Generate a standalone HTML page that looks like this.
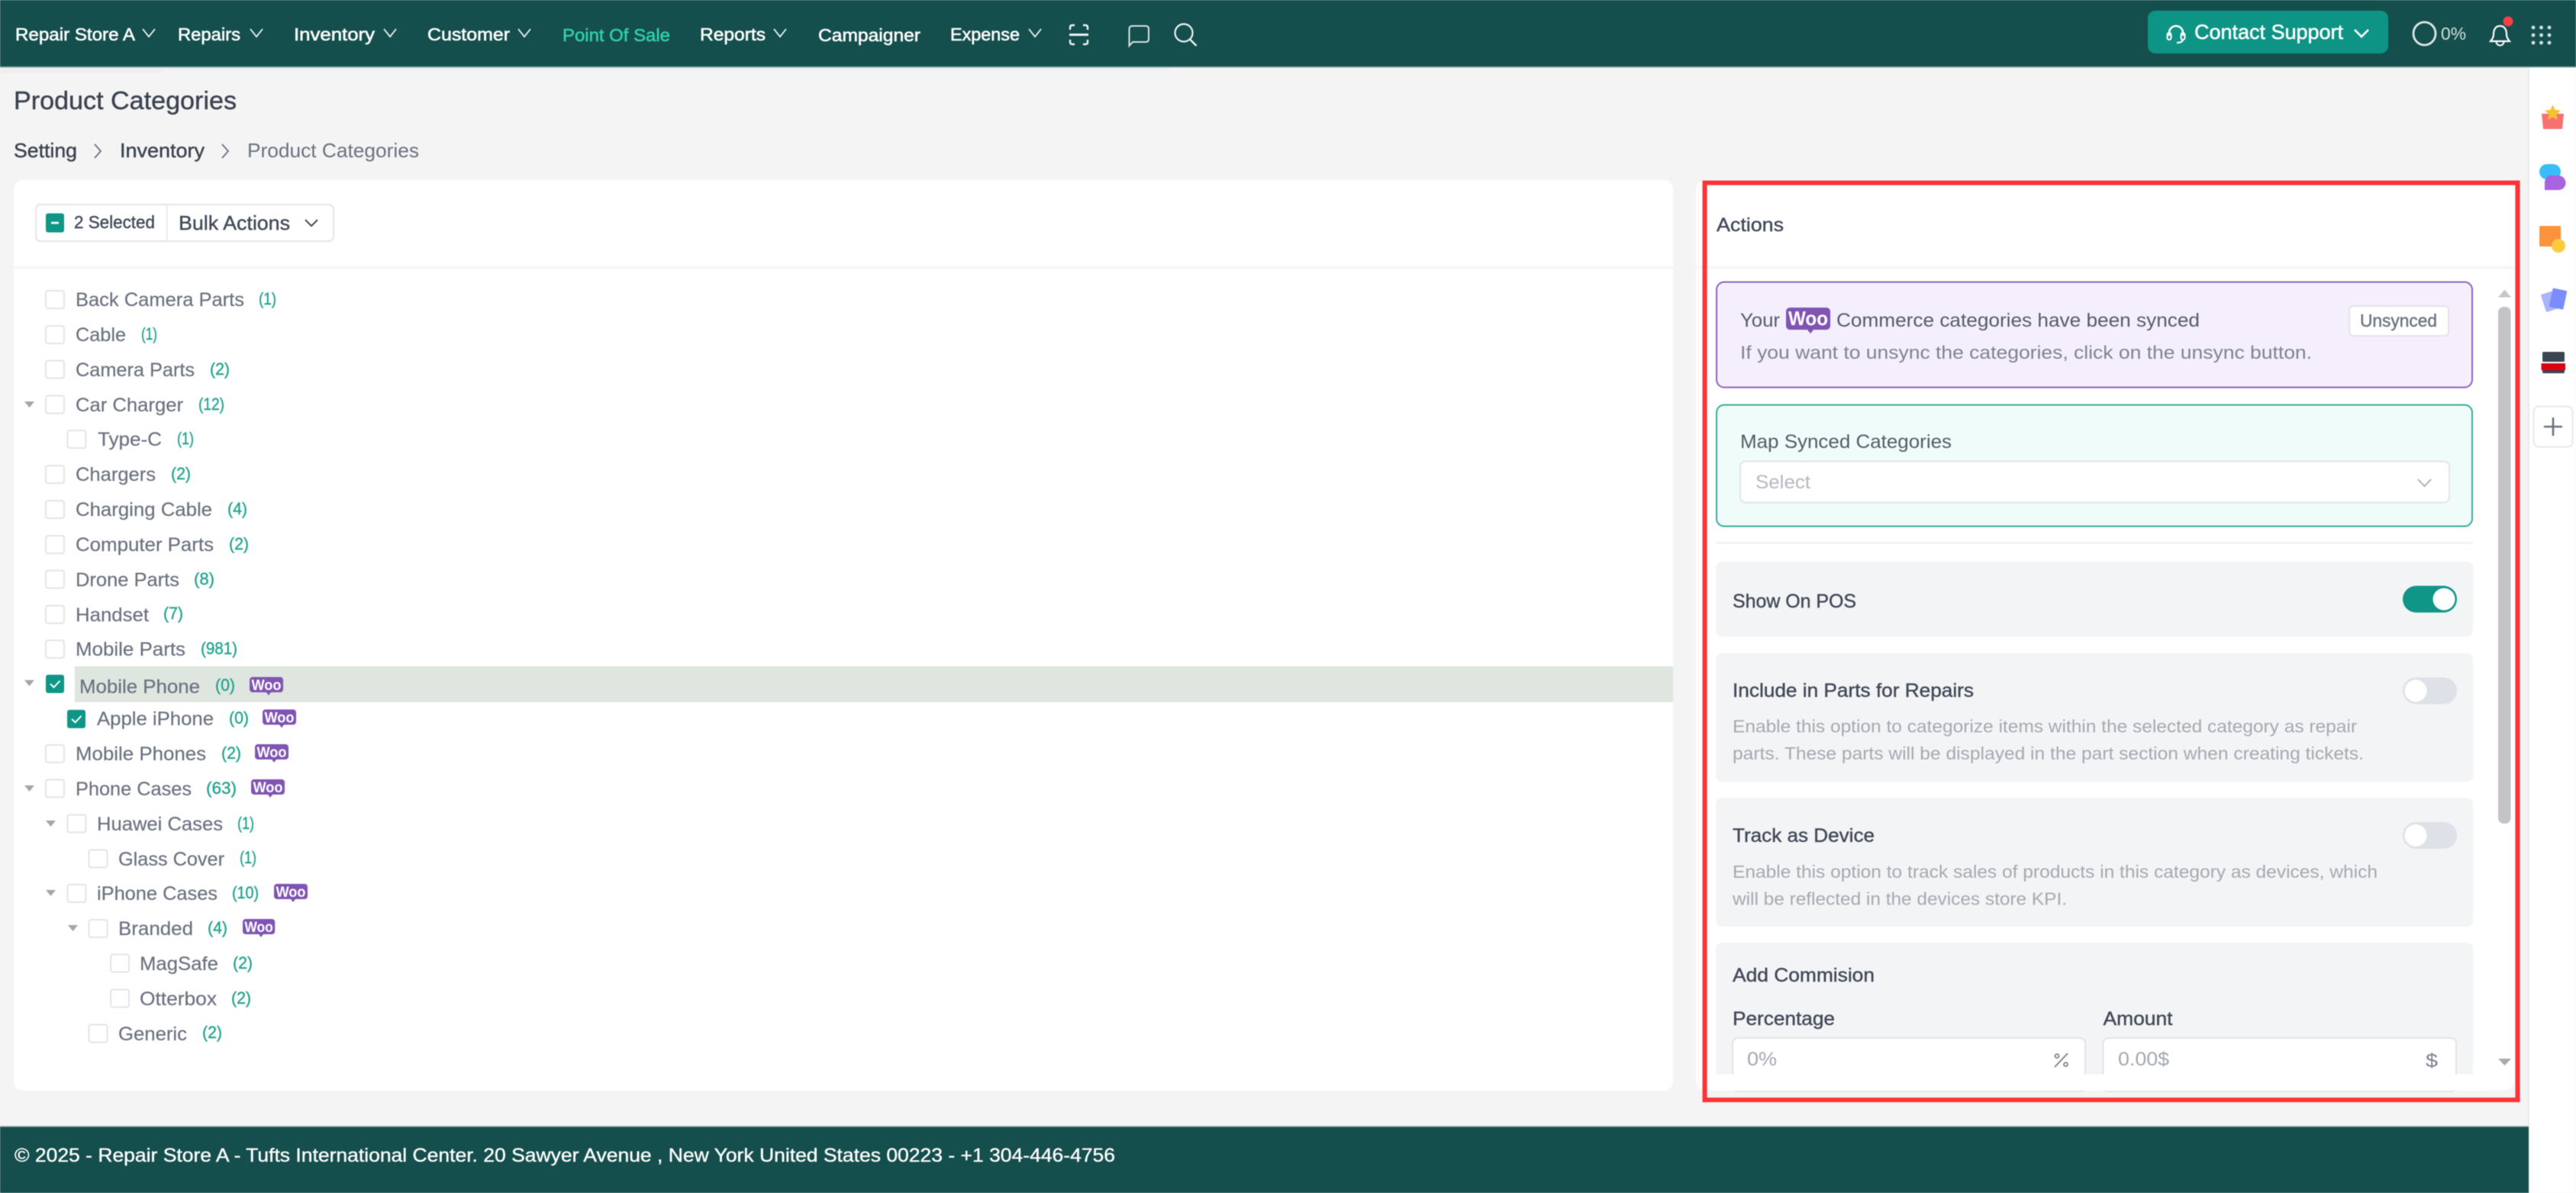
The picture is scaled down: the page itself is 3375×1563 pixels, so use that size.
<!DOCTYPE html>
<html lang="en"><head><meta charset="utf-8"><title>Product Categories</title>
<style>
html,body{margin:0;padding:0;width:3375px;height:1563px;overflow:hidden;background:#f4f4f4}
svg{display:block;filter:blur(.55px)}
text{font-family:"Liberation Sans",sans-serif;fill:currentColor;stroke:currentColor;stroke-width:0}
.m{stroke-width:.4px}
.n{font-size:23px;color:#fff;stroke-width:.55px}
.l{font-size:25px;color:#6b7280;stroke-width:.2px}
.c{font-size:22px;color:#27a592;stroke-width:.45px}
.b{fill:#fff;stroke:#e2e4ea;stroke-width:2}
.a{fill:#a3a6ad}
.w{font-size:19px;font-weight:bold;color:#fff}
.d{font-size:23px;color:#a5a9b1}
.h{font-size:25px;color:#414958}
</style></head><body>
<svg xmlns="http://www.w3.org/2000/svg" width="3375" height="1563" viewBox="0 0 3375 1563">
<rect width="3375" height="1563" fill="#f4f4f4"/>

<!-- right strip -->
<rect x="3313" y="88" width="62" height="1475" fill="#fff"/>
<rect x="3312" y="88" width="2" height="1475" fill="#e9eaee"/>

<!-- header -->
<rect x="0" y="88" width="212" height="8" fill="#efefef"/>
<rect x="212" y="88" width="1325" height="4" fill="#f0f0f0"/>
<rect width="3375" height="88" fill="#154f4d"/>
<rect y="87" width="3375" height="1.5" fill="#7d9e9c"/>
<text class="n" x="20" y="53" textLength="157" lengthAdjust="spacingAndGlyphs">Repair Store A</text>
<text class="n" x="233" y="53" textLength="82" lengthAdjust="spacingAndGlyphs">Repairs</text>
<text class="n" x="385" y="53" textLength="106" lengthAdjust="spacingAndGlyphs">Inventory</text>
<text class="n" x="560" y="53" textLength="108" lengthAdjust="spacingAndGlyphs">Customer</text>
<text class="n" x="737" y="54" textLength="141" lengthAdjust="spacingAndGlyphs" style="color:#2fd0ad">Point Of Sale</text>
<text class="n" x="917" y="53" textLength="86" lengthAdjust="spacingAndGlyphs">Reports</text>
<text class="n" x="1072" y="54" textLength="134" lengthAdjust="spacingAndGlyphs">Campaigner</text>
<text class="n" x="1245" y="53" textLength="91" lengthAdjust="spacingAndGlyphs">Expense</text>
<g fill="none" stroke="#eef4f3" stroke-width="1.8">
<path d="M187 38l8 10 8-10M328 38l8 10 8-10M503 38l8 10 8-10M679 38l8 10 8-10M1014 38l8 10 8-10M1348 38l8 10 8-10"/>
<path stroke-width="2.4" d="M1402 39v-3q0-3 3-3h3M1419 33h3q3 0 3 3v3M1402 52v3q0 3 3 3h3M1419 58h3q3 0 3-3v-3"/>
<path stroke-width="3" d="M1401 45.500h25"/>
<path stroke="#d7e3e2" stroke-width="2" d="M1479.500 60V38q0-4 4-4h17.500q4 0 4 4v13q0 4-4 4h-17z"/>
<circle cx="1551" cy="43" r="11.500" stroke-width="2.200"/><path stroke-width="2.400" d="M1559.500 52l8 8"/>
</g>
<rect x="2814" y="14" width="315" height="56" rx="10" fill="#0e9485"/>
<g fill="none" stroke="#fff">
<path stroke-width="2.600" d="M2842 47v-4a9 9 0 0 1 18 0v4"/>
<rect x="2839.500" y="43" width="5" height="9" rx="2.500" stroke-width="2"/><rect x="2857.500" y="43" width="5" height="9" rx="2.500" stroke-width="2"/>
<path stroke-width="2.200" d="M2860 52q-1 4-8 4"/>
<path stroke-width="2.600" d="M3085 39l9 9 9-9"/>
</g>
<text x="2875" y="51" textLength="195" lengthAdjust="spacingAndGlyphs" style="color:#fff;font-size:27px;stroke-width:.5px">Contact Support</text>
<ellipse cx="3176.500" cy="44" rx="14.500" ry="15" fill="none" stroke="#dfe7e6" stroke-width="2.800"/>
<text x="3198" y="52" textLength="33" lengthAdjust="spacingAndGlyphs" style="color:#cfe0df;font-size:23px">0%</text>
<path d="M3275.500 34c-6 0-8.500 5-8.500 11c0 5-2.500 7-4 9h25c-1.500-2-4-4-4-9c0-6-2.500-11-8.500-11z" fill="none" stroke="#fff" stroke-width="2.200"/>
<path d="M3270.500 54.500a5 5 0 0 0 10 0" fill="none" stroke="#fff" stroke-width="2"/>
<circle cx="3286" cy="28" r="6.500" fill="#f4404a"/>
<g fill="#d5e1e0"><circle cx="3319" cy="36" r="2.400"/><circle cx="3329.500" cy="36" r="2.400"/><circle cx="3340" cy="36" r="2.400"/><circle cx="3319" cy="46" r="2.400"/><circle cx="3329.500" cy="46" r="2.400"/><circle cx="3340" cy="46" r="2.400"/><circle cx="3319" cy="56" r="2.400"/><circle cx="3329.500" cy="56" r="2.400"/><circle cx="3340" cy="56" r="2.400"/></g>

<!-- page title -->
<text x="18" y="143" textLength="292" lengthAdjust="spacingAndGlyphs" class="m" style="font-size:33px;color:#3b4350">Product Categories</text>
<text x="18" y="206" textLength="83" lengthAdjust="spacingAndGlyphs" class="m" style="font-size:26px;color:#3b4350">Setting</text>
<text x="157" y="206" textLength="111" lengthAdjust="spacingAndGlyphs" class="m" style="font-size:26px;color:#3b4350">Inventory</text>
<text x="324" y="206" textLength="225" lengthAdjust="spacingAndGlyphs" style="font-size:26px;color:#6b7280">Product Categories</text>
<path d="M124 189l8 9-8 9M291 189l8 9-8 9" fill="none" stroke="#6b7280" stroke-width="1.800"/>

<!-- left panel -->
<rect x="18" y="236" width="2174" height="1193" rx="12" fill="#fff"/>
<rect x="18" y="349" width="2174" height="3" fill="#f3f4f5"/>
<rect x="47" y="268" width="390" height="48" rx="6" fill="#fff" stroke="#e4e6ea" stroke-width="2"/>
<rect x="218" y="268" width="1.500" height="48" fill="#e4e6ea"/>
<rect x="60" y="279.500" width="24" height="25" rx="3" fill="#0f9686"/>
<rect x="67" y="290.500" width="10" height="3" fill="#e8f5f3"/>
<text x="97" y="299" textLength="106" lengthAdjust="spacingAndGlyphs" class="m" style="font-size:23px;color:#414958">2 Selected</text>
<text x="234" y="301" textLength="146" lengthAdjust="spacingAndGlyphs" class="m" style="font-size:26px;color:#414958">Bulk Actions</text>
<path d="M400 288l8 8 8-8" fill="none" stroke="#414958" stroke-width="2"/>

<rect x="98" y="873" width="2094" height="47" fill="#dfe6df"/>

<!-- tree boxes -->
<g>
<rect class="b" x="60" y="381" width="24" height="23" rx="3"/>
<rect class="b" x="60" y="427" width="24" height="23" rx="3"/>
<rect class="b" x="60" y="472.500" width="24" height="23" rx="3"/>
<rect class="b" x="60" y="518.500" width="24" height="23" rx="3"/>
<rect class="b" x="88.500" y="564" width="24" height="23" rx="3"/>
<rect class="b" x="60" y="610" width="24" height="23" rx="3"/>
<rect class="b" x="60" y="656" width="24" height="23" rx="3"/>
<rect class="b" x="60" y="702" width="24" height="23" rx="3"/>
<rect class="b" x="60" y="747.500" width="24" height="23" rx="3"/>
<rect class="b" x="60" y="793.500" width="24" height="23" rx="3"/>
<rect class="b" x="60" y="839" width="24" height="23" rx="3"/>
<rect class="b" x="60" y="976" width="24" height="23" rx="3"/>
<rect class="b" x="60" y="1021.500" width="24" height="23" rx="3"/>
<rect class="b" x="88.500" y="1067.500" width="24" height="23" rx="3"/>
<rect class="b" x="116.500" y="1113.500" width="24" height="23" rx="3"/>
<rect class="b" x="88.500" y="1159" width="24" height="23" rx="3"/>
<rect class="b" x="116.500" y="1205" width="24" height="23" rx="3"/>
<rect class="b" x="145" y="1250.500" width="24" height="23" rx="3"/>
<rect class="b" x="145" y="1296.500" width="24" height="23" rx="3"/>
<rect class="b" x="116.500" y="1342.500" width="24" height="23" rx="3"/>
</g>
<rect x="60" y="884" width="24" height="24" rx="3" fill="#0f9686"/>
<path d="M66 896l4.500 4.500 8-8.500" fill="none" stroke="#fff" stroke-width="2"/>
<rect x="88" y="930" width="24" height="24" rx="3" fill="#0f9686"/>
<path d="M94 942l4.500 4.500 8-8.500" fill="none" stroke="#fff" stroke-width="2"/>
<g>
<path class="a" d="M32 526h13l-6.500 8z"/>
<path class="a" d="M32 891h13l-6.500 8z"/>
<path class="a" d="M32 1029h13l-6.500 8z"/>
<path class="a" d="M60 1075h13l-6.500 8z"/>
<path class="a" d="M60 1166h13l-6.500 8z"/>
<path class="a" d="M89 1212h13l-6.500 8z"/>
</g>

<!-- tree labels -->
<text class="l" x="99" y="401" textLength="221" lengthAdjust="spacingAndGlyphs">Back Camera Parts</text>
<text class="l" x="99" y="447" textLength="66" lengthAdjust="spacingAndGlyphs">Cable</text>
<text class="l" x="99" y="493" textLength="156" lengthAdjust="spacingAndGlyphs">Camera Parts</text>
<text class="l" x="99" y="539" textLength="141" lengthAdjust="spacingAndGlyphs">Car Charger</text>
<text class="l" x="128" y="584" textLength="84" lengthAdjust="spacingAndGlyphs">Type-C</text>
<text class="l" x="99" y="630" textLength="105" lengthAdjust="spacingAndGlyphs">Chargers</text>
<text class="l" x="99" y="676" textLength="179" lengthAdjust="spacingAndGlyphs">Charging Cable</text>
<text class="l" x="99" y="722" textLength="181" lengthAdjust="spacingAndGlyphs">Computer Parts</text>
<text class="l" x="99" y="768" textLength="136" lengthAdjust="spacingAndGlyphs">Drone Parts</text>
<text class="l" x="99" y="814" textLength="96" lengthAdjust="spacingAndGlyphs">Handset</text>
<text class="l" x="99" y="859" textLength="144" lengthAdjust="spacingAndGlyphs">Mobile Parts</text>
<text class="l" x="104" y="908" textLength="158" lengthAdjust="spacingAndGlyphs">Mobile Phone</text>
<text class="l" x="127" y="950" textLength="153" lengthAdjust="spacingAndGlyphs">Apple iPhone</text>
<text class="l" x="99" y="996" textLength="171" lengthAdjust="spacingAndGlyphs">Mobile Phones</text>
<text class="l" x="99" y="1042" textLength="152" lengthAdjust="spacingAndGlyphs">Phone Cases</text>
<text class="l" x="127" y="1088" textLength="165" lengthAdjust="spacingAndGlyphs">Huawei Cases</text>
<text class="l" x="155" y="1134" textLength="139" lengthAdjust="spacingAndGlyphs">Glass Cover</text>
<text class="l" x="127" y="1179" textLength="158" lengthAdjust="spacingAndGlyphs">iPhone Cases</text>
<text class="l" x="155" y="1225" textLength="98" lengthAdjust="spacingAndGlyphs">Branded</text>
<text class="l" x="183" y="1271" textLength="103" lengthAdjust="spacingAndGlyphs">MagSafe</text>
<text class="l" x="183" y="1317" textLength="101" lengthAdjust="spacingAndGlyphs">Otterbox</text>
<text class="l" x="155" y="1363" textLength="90" lengthAdjust="spacingAndGlyphs">Generic</text>

<text class="c" x="339" y="399" textLength="23" lengthAdjust="spacingAndGlyphs">(1)</text>
<text class="c" x="185" y="445" textLength="21" lengthAdjust="spacingAndGlyphs">(1)</text>
<text class="c" x="275" y="491" textLength="26" lengthAdjust="spacingAndGlyphs">(2)</text>
<text class="c" x="260" y="537" textLength="34" lengthAdjust="spacingAndGlyphs">(12)</text>
<text class="c" x="232" y="582" textLength="22" lengthAdjust="spacingAndGlyphs">(1)</text>
<text class="c" x="224" y="628" textLength="26" lengthAdjust="spacingAndGlyphs">(2)</text>
<text class="c" x="298" y="674" textLength="26" lengthAdjust="spacingAndGlyphs">(4)</text>
<text class="c" x="300" y="720" textLength="26" lengthAdjust="spacingAndGlyphs">(2)</text>
<text class="c" x="254" y="766" textLength="27" lengthAdjust="spacingAndGlyphs">(8)</text>
<text class="c" x="214" y="811" textLength="26" lengthAdjust="spacingAndGlyphs">(7)</text>
<text class="c" x="263" y="857" textLength="48" lengthAdjust="spacingAndGlyphs">(981)</text>
<text class="c" x="282" y="905" textLength="26" lengthAdjust="spacingAndGlyphs">(0)</text>
<text class="c" x="300" y="948" textLength="26" lengthAdjust="spacingAndGlyphs">(0)</text>
<text class="c" x="290" y="994" textLength="26" lengthAdjust="spacingAndGlyphs">(2)</text>
<text class="c" x="270" y="1040" textLength="40" lengthAdjust="spacingAndGlyphs">(63)</text>
<text class="c" x="311" y="1086" textLength="22" lengthAdjust="spacingAndGlyphs">(1)</text>
<text class="c" x="314" y="1131" textLength="22" lengthAdjust="spacingAndGlyphs">(1)</text>
<text class="c" x="304" y="1177" textLength="35" lengthAdjust="spacingAndGlyphs">(10)</text>
<text class="c" x="272" y="1223" textLength="26" lengthAdjust="spacingAndGlyphs">(4)</text>
<text class="c" x="305" y="1269" textLength="26" lengthAdjust="spacingAndGlyphs">(2)</text>
<text class="c" x="303" y="1315" textLength="26" lengthAdjust="spacingAndGlyphs">(2)</text>
<text class="c" x="265" y="1360" textLength="26" lengthAdjust="spacingAndGlyphs">(2)</text>

<g transform="translate(327,887)"><path fill="#7f54b3" d="M4 0H40a4 4 0 0 1 4 4V16a4 4 0 0 1-4 4H28l-3 4-3-4H4a4 4 0 0 1-4-4V4a4 4 0 0 1 4-4Z"/><text class="w" x="2.500" y="17" textLength="39" lengthAdjust="spacingAndGlyphs">Woo</text></g>
<g transform="translate(344,929.500)"><path fill="#7f54b3" d="M4 0H40a4 4 0 0 1 4 4V16a4 4 0 0 1-4 4H28l-3 4-3-4H4a4 4 0 0 1-4-4V4a4 4 0 0 1 4-4Z"/><text class="w" x="2.500" y="17" textLength="39" lengthAdjust="spacingAndGlyphs">Woo</text></g>
<g transform="translate(334,975)"><path fill="#7f54b3" d="M4 0H40a4 4 0 0 1 4 4V16a4 4 0 0 1-4 4H28l-3 4-3-4H4a4 4 0 0 1-4-4V4a4 4 0 0 1 4-4Z"/><text class="w" x="2.500" y="17" textLength="39" lengthAdjust="spacingAndGlyphs">Woo</text></g>
<g transform="translate(329,1021)"><path fill="#7f54b3" d="M4 0H40a4 4 0 0 1 4 4V16a4 4 0 0 1-4 4H28l-3 4-3-4H4a4 4 0 0 1-4-4V4a4 4 0 0 1 4-4Z"/><text class="w" x="2.500" y="17" textLength="39" lengthAdjust="spacingAndGlyphs">Woo</text></g>
<g transform="translate(359,1158)"><path fill="#7f54b3" d="M4 0H40a4 4 0 0 1 4 4V16a4 4 0 0 1-4 4H28l-3 4-3-4H4a4 4 0 0 1-4-4V4a4 4 0 0 1 4-4Z"/><text class="w" x="2.500" y="17" textLength="39" lengthAdjust="spacingAndGlyphs">Woo</text></g>
<g transform="translate(318,1204) scale(.96,1)"><path fill="#7f54b3" d="M4 0H40a4 4 0 0 1 4 4V16a4 4 0 0 1-4 4H28l-3 4-3-4H4a4 4 0 0 1-4-4V4a4 4 0 0 1 4-4Z"/><text class="w" x="2.500" y="17" textLength="39" lengthAdjust="spacingAndGlyphs">Woo</text></g>

<!-- right panel -->
<rect x="2222" y="236" width="1072" height="1192" rx="12" fill="#fff"/>
<rect x="2222" y="349" width="1073" height="3" fill="#f3f4f5"/>
<text x="2249" y="303" textLength="88" lengthAdjust="spacingAndGlyphs" class="m" style="font-size:25px;color:#414958">Actions</text>

<rect x="2249" y="369.500" width="990" height="138" rx="10" fill="#f5effd" stroke="#8d63b8" stroke-width="2"/>
<text x="2280" y="428" textLength="52" lengthAdjust="spacingAndGlyphs" class="h" style="color:#555c69">Your</text>
<g transform="translate(2340,403)"><path fill="#7f54b3" d="M5 0H53a5 5 0 0 1 5 5V24a5 5 0 0 1-5 5H36l-4 5-4-5H5a5 5 0 0 1-5-5V5a5 5 0 0 1 5-5Z"/><text class="w" x="3" y="23" textLength="52" lengthAdjust="spacingAndGlyphs" style="font-size:26px">Woo</text></g>
<text x="2406" y="428" textLength="476" lengthAdjust="spacingAndGlyphs" class="h" style="color:#555c69">Commerce categories have been synced</text>
<text x="2280" y="470" textLength="749" lengthAdjust="spacingAndGlyphs" style="font-size:24px;color:#7f848e">If you want to unsync the categories, click on the unsync button.</text>
<rect x="3078" y="401" width="130" height="39" rx="5" fill="#fff" stroke="#e2e3e8" stroke-width="2"/>
<text x="3092" y="428" textLength="101" lengthAdjust="spacingAndGlyphs" class="m" style="font-size:23px;color:#6b7280">Unsynced</text>

<rect x="2249" y="530.500" width="990" height="159" rx="10" fill="#effcf9" stroke="#3aa99b" stroke-width="2"/>
<text x="2280" y="587" textLength="277" lengthAdjust="spacingAndGlyphs" class="h" style="color:#555c69">Map Synced Categories</text>
<rect x="2280" y="604.500" width="929" height="54" rx="7" fill="#fff" stroke="#e2e4ea" stroke-width="2"/>
<text x="2300" y="640" textLength="72" lengthAdjust="spacingAndGlyphs" style="font-size:25px;color:#b4b8bf">Select</text>
<path d="M3168 628l8.500 9 8.500-9" fill="none" stroke="#a9adb5" stroke-width="1.800"/>
<rect x="2248" y="710" width="992" height="2.500" fill="#f1f2f3"/>

<rect x="2248" y="736" width="992" height="98" rx="8" fill="#f3f4f6"/>
<text x="2270" y="796" textLength="162" lengthAdjust="spacingAndGlyphs" class="h m">Show On POS</text>
<rect x="3148" y="767.500" width="71" height="35" rx="17.500" fill="#0f9686"/>
<circle cx="3202" cy="785" r="14.500" fill="#fff"/>

<rect x="2248" y="856" width="992" height="168" rx="8" fill="#f3f4f6"/>
<text x="2270" y="913" textLength="316" lengthAdjust="spacingAndGlyphs" class="h m">Include in Parts for Repairs</text>
<rect x="3148" y="887.500" width="71" height="35" rx="17.500" fill="#dfe1e8"/>
<circle cx="3165" cy="905" r="14.500" fill="#fff"/>
<text class="d" x="2270" y="959.500" textLength="818" lengthAdjust="spacingAndGlyphs">Enable this option to categorize items within the selected category as repair</text>
<text class="d" x="2270" y="995" textLength="827" lengthAdjust="spacingAndGlyphs">parts. These parts will be displayed in the part section when creating tickets.</text>

<rect x="2248" y="1045.500" width="992" height="168.500" rx="8" fill="#f3f4f6"/>
<text x="2270" y="1103" textLength="186" lengthAdjust="spacingAndGlyphs" class="h m">Track as Device</text>
<rect x="3148" y="1077" width="71" height="35" rx="17.500" fill="#dfe1e8"/>
<circle cx="3165" cy="1094.500" r="14.500" fill="#fff"/>
<text class="d" x="2270" y="1150" textLength="845" lengthAdjust="spacingAndGlyphs">Enable this option to track sales of products in this category as devices, which</text>
<text class="d" x="2270" y="1185.500" textLength="438" lengthAdjust="spacingAndGlyphs">will be reflected in the devices store KPI.</text>

<rect x="2248" y="1235" width="992" height="190" rx="8" fill="#f3f4f6"/>
<text x="2270" y="1286" textLength="186" lengthAdjust="spacingAndGlyphs" class="h m">Add Commision</text>
<text x="2270" y="1343" textLength="134" lengthAdjust="spacingAndGlyphs" class="h m">Percentage</text>
<text x="2755.500" y="1343" textLength="91" lengthAdjust="spacingAndGlyphs" class="h m">Amount</text>
<rect x="2270" y="1360" width="462" height="70" rx="7" fill="#fff" stroke="#e2e4ea" stroke-width="2"/>
<rect x="2755.500" y="1360" width="462.500" height="70" rx="7" fill="#fff" stroke="#e2e4ea" stroke-width="2"/>
<text x="2289" y="1396" textLength="39" lengthAdjust="spacingAndGlyphs" style="font-size:25px;color:#a3a8b0">0%</text>
<g fill="none" stroke="#7b808a" stroke-width="1.800"><path d="M2709 1380l-17 18"/><circle cx="2695" cy="1383.500" r="2.500"/><circle cx="2706.500" cy="1394.500" r="2.500"/></g>
<text x="2775" y="1396" textLength="67" lengthAdjust="spacingAndGlyphs" style="font-size:25px;color:#a3a8b0">0.00$</text>
<text x="3178" y="1398" textLength="16" lengthAdjust="spacingAndGlyphs" style="font-size:25px;color:#7b808a">$</text>
<rect x="2240" y="1407.500" width="1030" height="21" fill="#fff"/>

<!-- scrollbar -->
<path d="M3273 389.500h17l-8.500-10z" fill="#c4c6ca"/>
<rect x="3273" y="402" width="16.500" height="677" rx="7" fill="#c2c4c8"/>
<path d="M3273 1387h17l-8.500 9z" fill="#a9abb0"/>

<!-- red highlight box -->
<rect x="2233.500" y="239.500" width="1065" height="1201.500" fill="none" stroke="#fe3336" stroke-width="6"/>

<!-- side icons -->
<path d="M3330 149h29l-2 20h-25z" fill="#f87171"/>
<path d="M3344.500 137l3 7 7.500.5-5.500 5.500 1.500 7-6.500-3.500-6.500 3.500 1.500-7-5.500-5.500 7.500-.5z" fill="#fbbf30"/>
<rect x="3327" y="215" width="28" height="20" rx="10" fill="#38bdf8"/>
<path d="M3334 240a10 10 0 0 1 6-10h12a9.500 9.500 0 0 1 0 19h-18z" fill="#a763e0"/>
<rect x="3327" y="296" width="28" height="27" rx="1.500" fill="#fb923c"/>
<circle cx="3352" cy="322" r="9" fill="#fbcb3f"/>
<rect x="3332" y="383" width="17" height="24" rx="1.500" fill="#a9b4fb" transform="rotate(-18 3340.500 395)"/>
<rect x="3342" y="379" width="19" height="25" rx="1.500" fill="#7b8cfb" transform="rotate(12 3351.500 391.500)"/>
<rect x="3331" y="461" width="29" height="13" rx="1.500" fill="#3d4451"/>
<rect x="3331" y="478" width="29" height="11" rx="1.500" fill="#3d4451"/>
<rect x="3329.500" y="476" width="31.500" height="9" fill="#d9000f"/>
<rect x="3319.500" y="532.500" width="51" height="53" rx="7" fill="#fff" stroke="#e7e8ec" stroke-width="2"/>
<path d="M3345 547v24M3333 559h24" stroke="#6b7280" stroke-width="2.600" fill="none"/>

<!-- footer -->
<rect x="0" y="1475" width="3313" height="2" fill="#a8b0af"/>
<rect x="0" y="1476.500" width="3313" height="86.500" fill="#154f4d"/>
<text x="19" y="1522" textLength="1442" lengthAdjust="spacingAndGlyphs" style="font-size:25px;color:#fff;stroke-width:.35px">© 2025 - Repair Store A - Tufts International Center. 20 Sawyer Avenue , New York United States 00223 - +1 304-446-4756</text>
</svg>
</body></html>
